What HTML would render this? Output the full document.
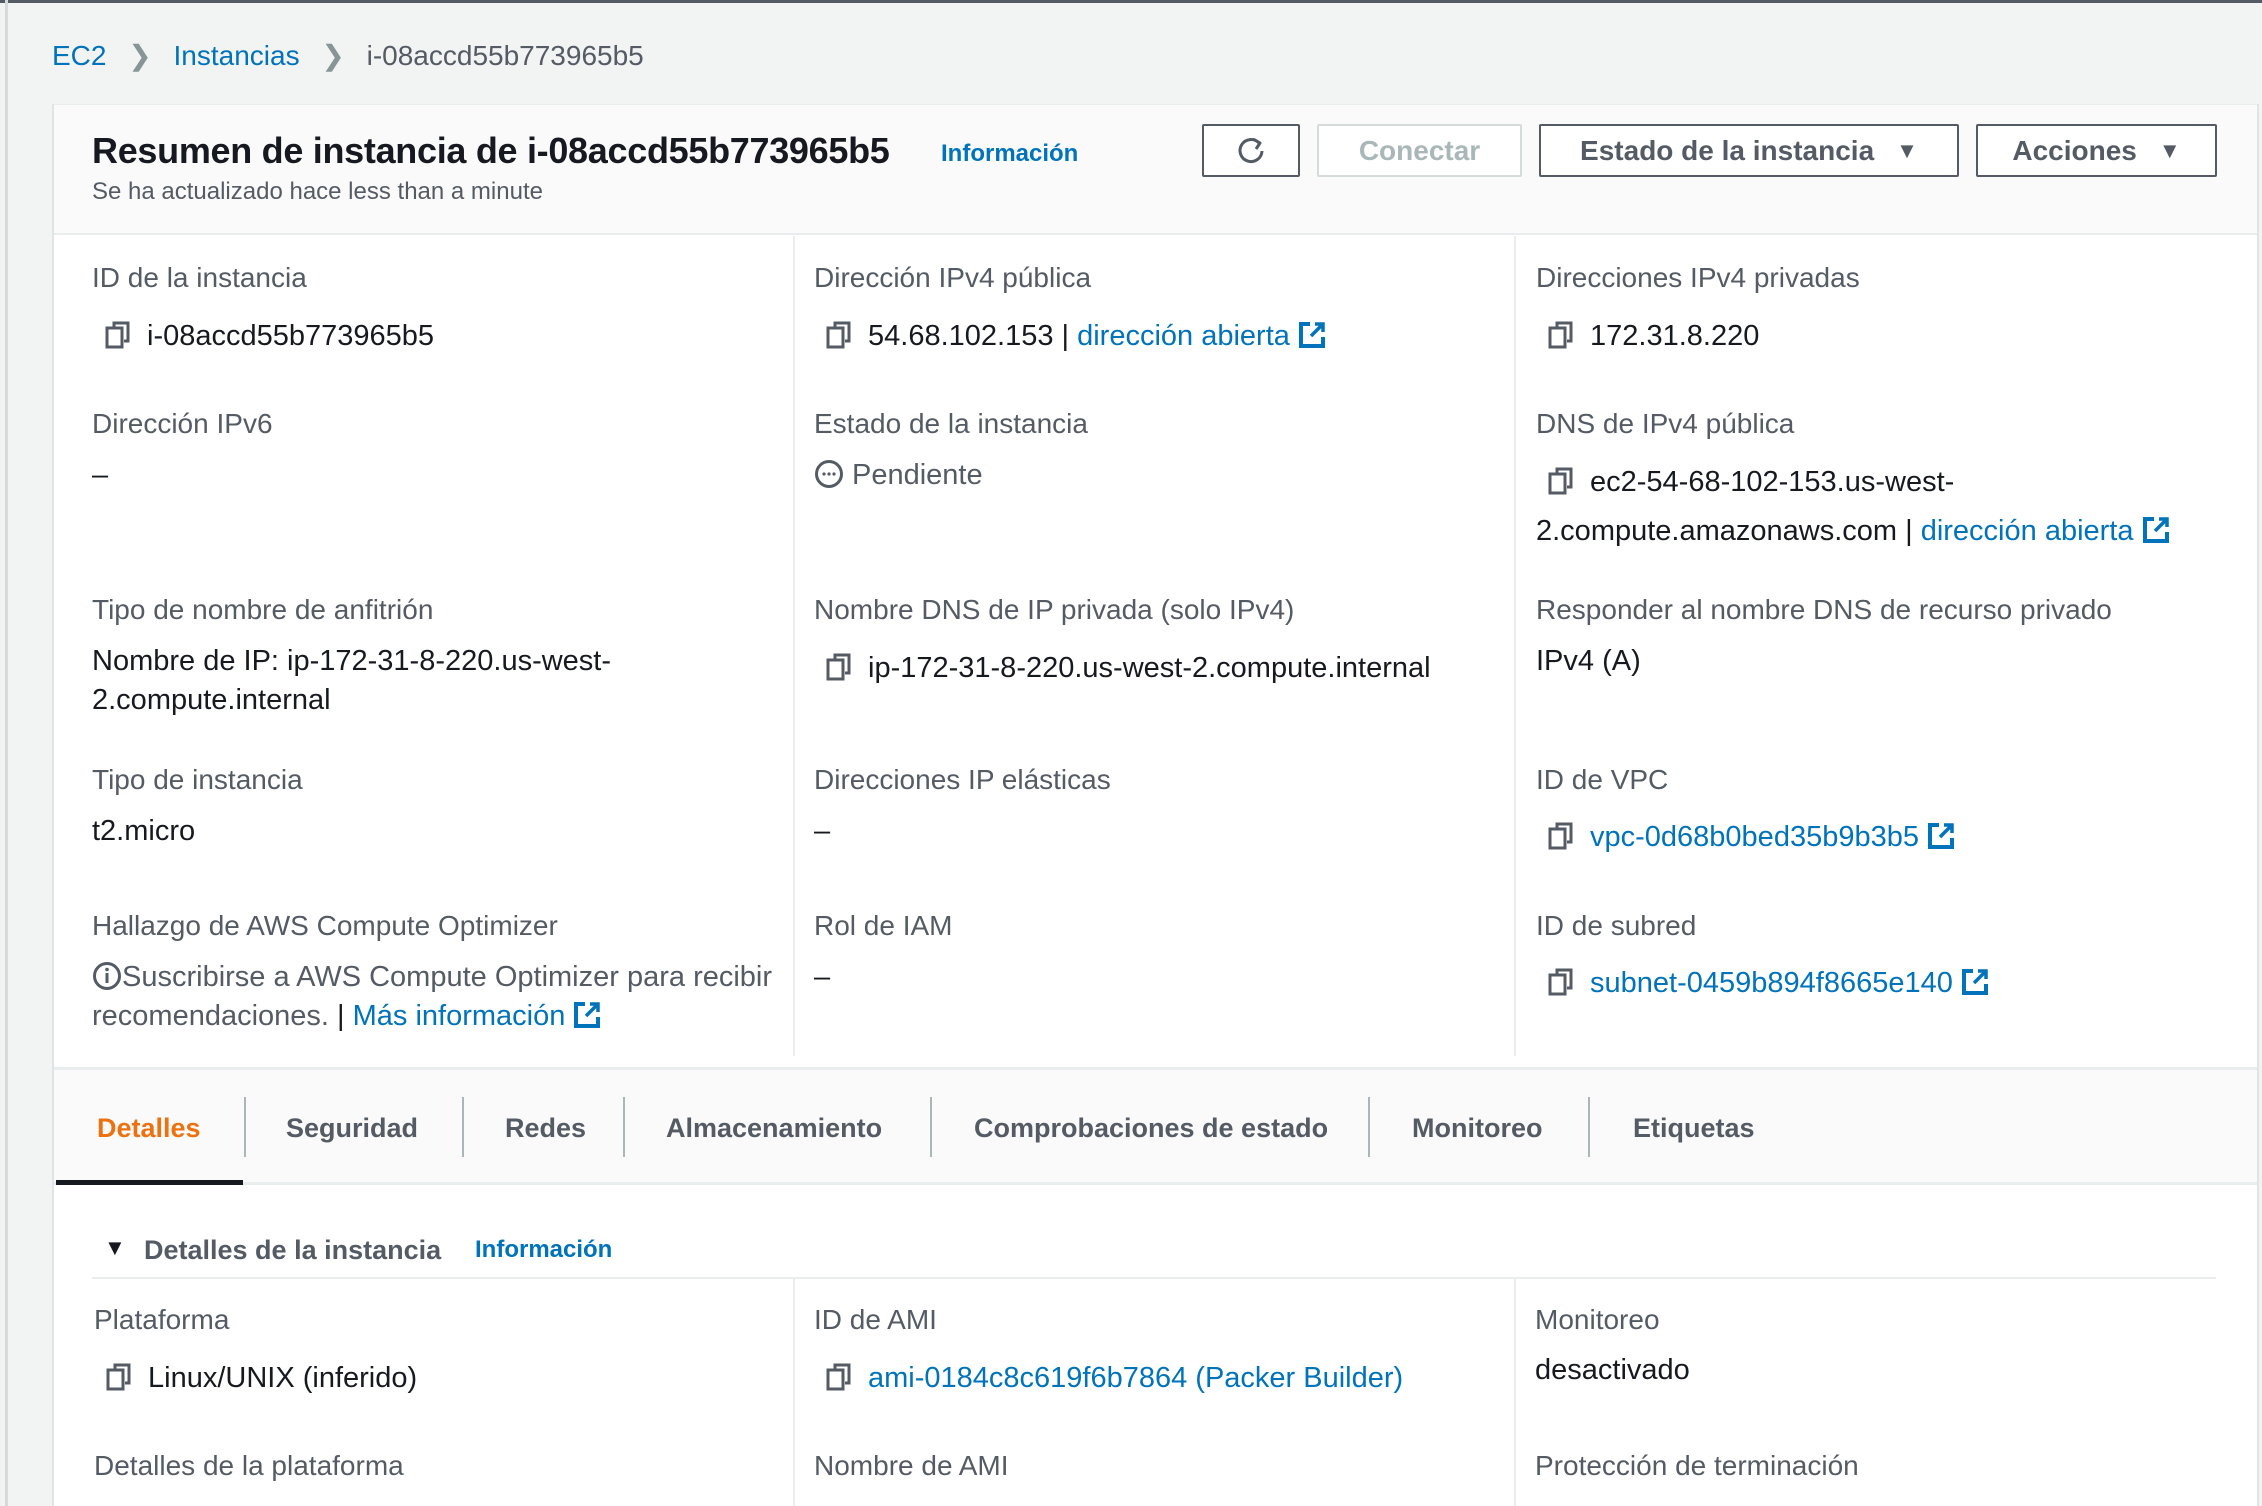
<!DOCTYPE html>
<html><head><meta charset="utf-8"><style>
body{margin:0;width:2262px;height:1506px;overflow:hidden;background:#f2f3f3;font-family:"Liberation Sans",sans-serif;position:relative;color:#16191f}
.a{position:absolute;white-space:nowrap;line-height:1.2}
.lbl{font-size:28px;color:#545b64}
.val{font-size:29px;color:#16191f}
.lnk{color:#0073bb}
.btn{position:absolute;top:124px;height:53px;border:2px solid #545b64;border-radius:2px;background:#fff;box-sizing:border-box;font-weight:bold;font-size:28px;color:#545b64;display:flex;align-items:center;justify-content:center}
.vl{position:absolute;width:2px;background:#eaeded}
.tab{position:absolute;top:1112px;font-size:27px;font-weight:bold;color:#545b64;line-height:1.2}
.ts{position:absolute;top:1097px;height:60px;width:2px;background:#aab7b8}
</style></head><body>
<div style="position:absolute;left:0;top:0;width:2262px;height:3px;background:#545b64"></div>
<div style="position:absolute;left:5px;top:0;width:3px;height:1506px;background:#d5dbdb"></div>

<div class="a" style="left:52px;top:39px;font-size:28px"><span class="lnk">EC2</span> <span style="color:#879596;margin:0 14px">&#x276F;</span> <span class="lnk">Instancias</span> <span style="color:#879596;margin:0 14px">&#x276F;</span> <span style="color:#545b64">i-08accd55b773965b5</span></div>

<div style="position:absolute;left:52px;top:104px;width:2207px;height:1402px;background:#fff;border-left:2px solid #e0e4e4;border-right:2px solid #e0e4e4;box-sizing:border-box"></div>
<div style="position:absolute;left:54px;top:104px;width:2203px;height:128px;background:#fafafa;border-bottom:2px solid #eaeded;border-top:1px solid #eaeded"></div>

<div class="a" style="left:92px;top:129px;font-size:36px;font-weight:bold;letter-spacing:-0.3px">Resumen de instancia de i-08accd55b773965b5</div>
<div class="a" style="left:92px;top:178px;font-size:24px;color:#545b64">Se ha actualizado hace less than a minute</div>
<div class="a lnk" style="left:941px;top:140px;font-size:24px;font-weight:bold">Información</div>

<div class="btn" style="left:1202px;width:98px"><svg width="34" height="34" viewBox="0 0 34 34" fill="none" stroke="#545b64" stroke-width="3"><path d="M25 9 A11 11 0 1 0 28 17"/><path d="M19 5 L26 9 L22 15" stroke-linejoin="round"/></svg></div>
<div class="btn" style="left:1317px;width:205px;border-color:#d5dbdb;color:#aab7b8">Conectar</div>
<div class="btn" style="left:1539px;width:420px">Estado de la instancia<span style="margin-left:22px;font-size:22px">&#9660;</span></div>
<div class="btn" style="left:1976px;width:241px">Acciones<span style="margin-left:22px;font-size:22px">&#9660;</span></div>

<div class="vl" style="left:793px;top:236px;height:820px"></div>
<div class="vl" style="left:1514px;top:236px;height:820px"></div>

<!-- row 1 -->
<div class="a lbl" style="left:92px;top:261px">ID de la instancia</div>
<div class="a lbl" style="left:814px;top:261px">Dirección IPv4 pública</div>
<div class="a lbl" style="left:1536px;top:261px">Direcciones IPv4 privadas</div>
<div class="a val" style="left:103px;top:319px"><svg width="30" height="30" viewBox="0 0 30 30" style="vertical-align:-5px;margin-right:14px"><path d="M11 7V3h14v18h-4" fill="none" stroke="#545b64" stroke-width="3"/><rect x="4" y="8" width="15" height="19" fill="none" stroke="#545b64" stroke-width="3"/></svg>i-08accd55b773965b5</div>
<div class="a val" style="left:824px;top:319px"><svg width="30" height="30" viewBox="0 0 30 30" style="vertical-align:-5px;margin-right:14px"><path d="M11 7V3h14v18h-4" fill="none" stroke="#545b64" stroke-width="3"/><rect x="4" y="8" width="15" height="19" fill="none" stroke="#545b64" stroke-width="3"/></svg>54.68.102.153 | <span class="lnk">dirección abierta</span> <svg width="28" height="28" viewBox="0 0 28 28" style="vertical-align:-4px"><path d="M12 3H3v22h22v-9" fill="none" stroke="#0073bb" stroke-width="4"/><path d="M17 3h8v8M25 3L13 15" fill="none" stroke="#0073bb" stroke-width="3.5"/></svg></div>
<div class="a val" style="left:1546px;top:319px"><svg width="30" height="30" viewBox="0 0 30 30" style="vertical-align:-5px;margin-right:14px"><path d="M11 7V3h14v18h-4" fill="none" stroke="#545b64" stroke-width="3"/><rect x="4" y="8" width="15" height="19" fill="none" stroke="#545b64" stroke-width="3"/></svg>172.31.8.220</div>

<!-- row 2 -->
<div class="a lbl" style="left:92px;top:407px">Dirección IPv6</div>
<div class="a lbl" style="left:814px;top:407px">Estado de la instancia</div>
<div class="a lbl" style="left:1536px;top:407px">DNS de IPv4 pública</div>
<div class="a val" style="left:92px;top:458px">–</div>
<div class="a val" style="left:814px;top:458px;color:#545b64"><svg width="30" height="30" viewBox="0 0 30 30" style="vertical-align:-5px;margin-right:8px"><circle cx="15" cy="15" r="12.5" fill="none" stroke="#545b64" stroke-width="3"/><circle cx="10" cy="15" r="1.6" fill="#545b64"/><circle cx="15" cy="15" r="1.6" fill="#545b64"/><circle cx="20" cy="15" r="1.6" fill="#545b64"/></svg>Pendiente</div>
<div class="a val" style="left:1546px;top:465px"><svg width="30" height="30" viewBox="0 0 30 30" style="vertical-align:-5px;margin-right:14px"><path d="M11 7V3h14v18h-4" fill="none" stroke="#545b64" stroke-width="3"/><rect x="4" y="8" width="15" height="19" fill="none" stroke="#545b64" stroke-width="3"/></svg>ec2-54-68-102-153.us-west-</div>
<div class="a val" style="left:1536px;top:514px">2.compute.amazonaws.com | <span class="lnk">dirección abierta</span> <svg width="28" height="28" viewBox="0 0 28 28" style="vertical-align:-4px"><path d="M12 3H3v22h22v-9" fill="none" stroke="#0073bb" stroke-width="4"/><path d="M17 3h8v8M25 3L13 15" fill="none" stroke="#0073bb" stroke-width="3.5"/></svg></div>

<!-- row 3 -->
<div class="a lbl" style="left:92px;top:593px">Tipo de nombre de anfitrión</div>
<div class="a lbl" style="left:814px;top:593px">Nombre DNS de IP privada (solo IPv4)</div>
<div class="a lbl" style="left:1536px;top:593px">Responder al nombre DNS de recurso privado</div>
<div class="a val" style="left:92px;top:644px">Nombre de IP: ip-172-31-8-220.us-west-</div>
<div class="a val" style="left:92px;top:683px">2.compute.internal</div>
<div class="a val" style="left:824px;top:651px"><svg width="30" height="30" viewBox="0 0 30 30" style="vertical-align:-5px;margin-right:14px"><path d="M11 7V3h14v18h-4" fill="none" stroke="#545b64" stroke-width="3"/><rect x="4" y="8" width="15" height="19" fill="none" stroke="#545b64" stroke-width="3"/></svg>ip-172-31-8-220.us-west-2.compute.internal</div>
<div class="a val" style="left:1536px;top:644px">IPv4 (A)</div>

<!-- row 4 -->
<div class="a lbl" style="left:92px;top:763px">Tipo de instancia</div>
<div class="a lbl" style="left:814px;top:763px">Direcciones IP elásticas</div>
<div class="a lbl" style="left:1536px;top:763px">ID de VPC</div>
<div class="a val" style="left:92px;top:814px">t2.micro</div>
<div class="a val" style="left:814px;top:814px">–</div>
<div class="a val" style="left:1546px;top:820px"><svg width="30" height="30" viewBox="0 0 30 30" style="vertical-align:-5px;margin-right:14px"><path d="M11 7V3h14v18h-4" fill="none" stroke="#545b64" stroke-width="3"/><rect x="4" y="8" width="15" height="19" fill="none" stroke="#545b64" stroke-width="3"/></svg><span class="lnk">vpc-0d68b0bed35b9b3b5</span> <svg width="28" height="28" viewBox="0 0 28 28" style="vertical-align:-4px"><path d="M12 3H3v22h22v-9" fill="none" stroke="#0073bb" stroke-width="4"/><path d="M17 3h8v8M25 3L13 15" fill="none" stroke="#0073bb" stroke-width="3.5"/></svg></div>

<!-- row 5 -->
<div class="a lbl" style="left:92px;top:909px">Hallazgo de AWS Compute Optimizer</div>
<div class="a lbl" style="left:814px;top:909px">Rol de IAM</div>
<div class="a lbl" style="left:1536px;top:909px">ID de subred</div>
<div class="a val" style="left:92px;top:960px;color:#545b64"><svg width="30" height="30" viewBox="0 0 30 30" style="vertical-align:-5px"><circle cx="15" cy="15" r="12.5" fill="none" stroke="#545b64" stroke-width="3"/><rect x="13.5" y="12" width="3" height="10" fill="#545b64"/><circle cx="15" cy="8.5" r="1.8" fill="#545b64"/></svg>Suscribirse a AWS Compute Optimizer para recibir</div>
<div class="a val" style="left:92px;top:999px;color:#545b64">recomendaciones. <span style="color:#16191f">|</span> <span class="lnk">Más información</span> <svg width="28" height="28" viewBox="0 0 28 28" style="vertical-align:-4px"><path d="M12 3H3v22h22v-9" fill="none" stroke="#0073bb" stroke-width="4"/><path d="M17 3h8v8M25 3L13 15" fill="none" stroke="#0073bb" stroke-width="3.5"/></svg></div>
<div class="a val" style="left:814px;top:960px">–</div>
<div class="a val" style="left:1546px;top:966px"><svg width="30" height="30" viewBox="0 0 30 30" style="vertical-align:-5px;margin-right:14px"><path d="M11 7V3h14v18h-4" fill="none" stroke="#545b64" stroke-width="3"/><rect x="4" y="8" width="15" height="19" fill="none" stroke="#545b64" stroke-width="3"/></svg><span class="lnk">subnet-0459b894f8665e140</span> <svg width="28" height="28" viewBox="0 0 28 28" style="vertical-align:-4px"><path d="M12 3H3v22h22v-9" fill="none" stroke="#0073bb" stroke-width="4"/><path d="M17 3h8v8M25 3L13 15" fill="none" stroke="#0073bb" stroke-width="3.5"/></svg></div>

<!-- tabs -->
<div style="position:absolute;left:54px;top:1067px;width:2203px;height:118px;background:#fafafa;border-top:3px solid #eaeded;border-bottom:3px solid #eaeded;box-sizing:border-box"></div>
<div style="position:absolute;left:56px;top:1180px;width:187px;height:5px;background:#16191f"></div>
<div class="tab" style="left:97px;color:#ec7211">Detalles</div>
<div class="ts" style="left:244px"></div>
<div class="tab" style="left:286px">Seguridad</div>
<div class="ts" style="left:462px"></div>
<div class="tab" style="left:505px">Redes</div>
<div class="ts" style="left:623px"></div>
<div class="tab" style="left:666px">Almacenamiento</div>
<div class="ts" style="left:930px"></div>
<div class="tab" style="left:974px">Comprobaciones de estado</div>
<div class="ts" style="left:1368px"></div>
<div class="tab" style="left:1412px">Monitoreo</div>
<div class="ts" style="left:1588px"></div>
<div class="tab" style="left:1633px">Etiquetas</div>

<!-- lower -->
<div class="a" style="left:104px;top:1235px;font-size:22px;color:#16191f">&#9660;</div>
<div class="a" style="left:144px;top:1234px;font-size:27px;font-weight:bold;color:#545b64">Detalles de la instancia</div>
<div class="a lnk" style="left:475px;top:1236px;font-size:24px;font-weight:bold">Información</div>
<div style="position:absolute;left:92px;top:1277px;width:2124px;height:2px;background:#eaeded"></div>
<div class="vl" style="left:793px;top:1279px;height:227px"></div>
<div class="vl" style="left:1514px;top:1279px;height:227px"></div>
<div class="a lbl" style="left:94px;top:1303px">Plataforma</div>
<div class="a lbl" style="left:814px;top:1303px">ID de AMI</div>
<div class="a lbl" style="left:1535px;top:1303px">Monitoreo</div>
<div class="a val" style="left:104px;top:1361px"><svg width="30" height="30" viewBox="0 0 30 30" style="vertical-align:-5px;margin-right:14px"><path d="M11 7V3h14v18h-4" fill="none" stroke="#545b64" stroke-width="3"/><rect x="4" y="8" width="15" height="19" fill="none" stroke="#545b64" stroke-width="3"/></svg>Linux/UNIX (inferido)</div>
<div class="a val" style="left:824px;top:1361px"><svg width="30" height="30" viewBox="0 0 30 30" style="vertical-align:-5px;margin-right:14px"><path d="M11 7V3h14v18h-4" fill="none" stroke="#545b64" stroke-width="3"/><rect x="4" y="8" width="15" height="19" fill="none" stroke="#545b64" stroke-width="3"/></svg><span class="lnk">ami-0184c8c619f6b7864 (Packer Builder)</span></div>
<div class="a val" style="left:1535px;top:1353px">desactivado</div>
<div class="a lbl" style="left:94px;top:1449px">Detalles de la plataforma</div>
<div class="a lbl" style="left:814px;top:1449px">Nombre de AMI</div>
<div class="a lbl" style="left:1535px;top:1449px">Protección de terminación</div>
</body></html>
